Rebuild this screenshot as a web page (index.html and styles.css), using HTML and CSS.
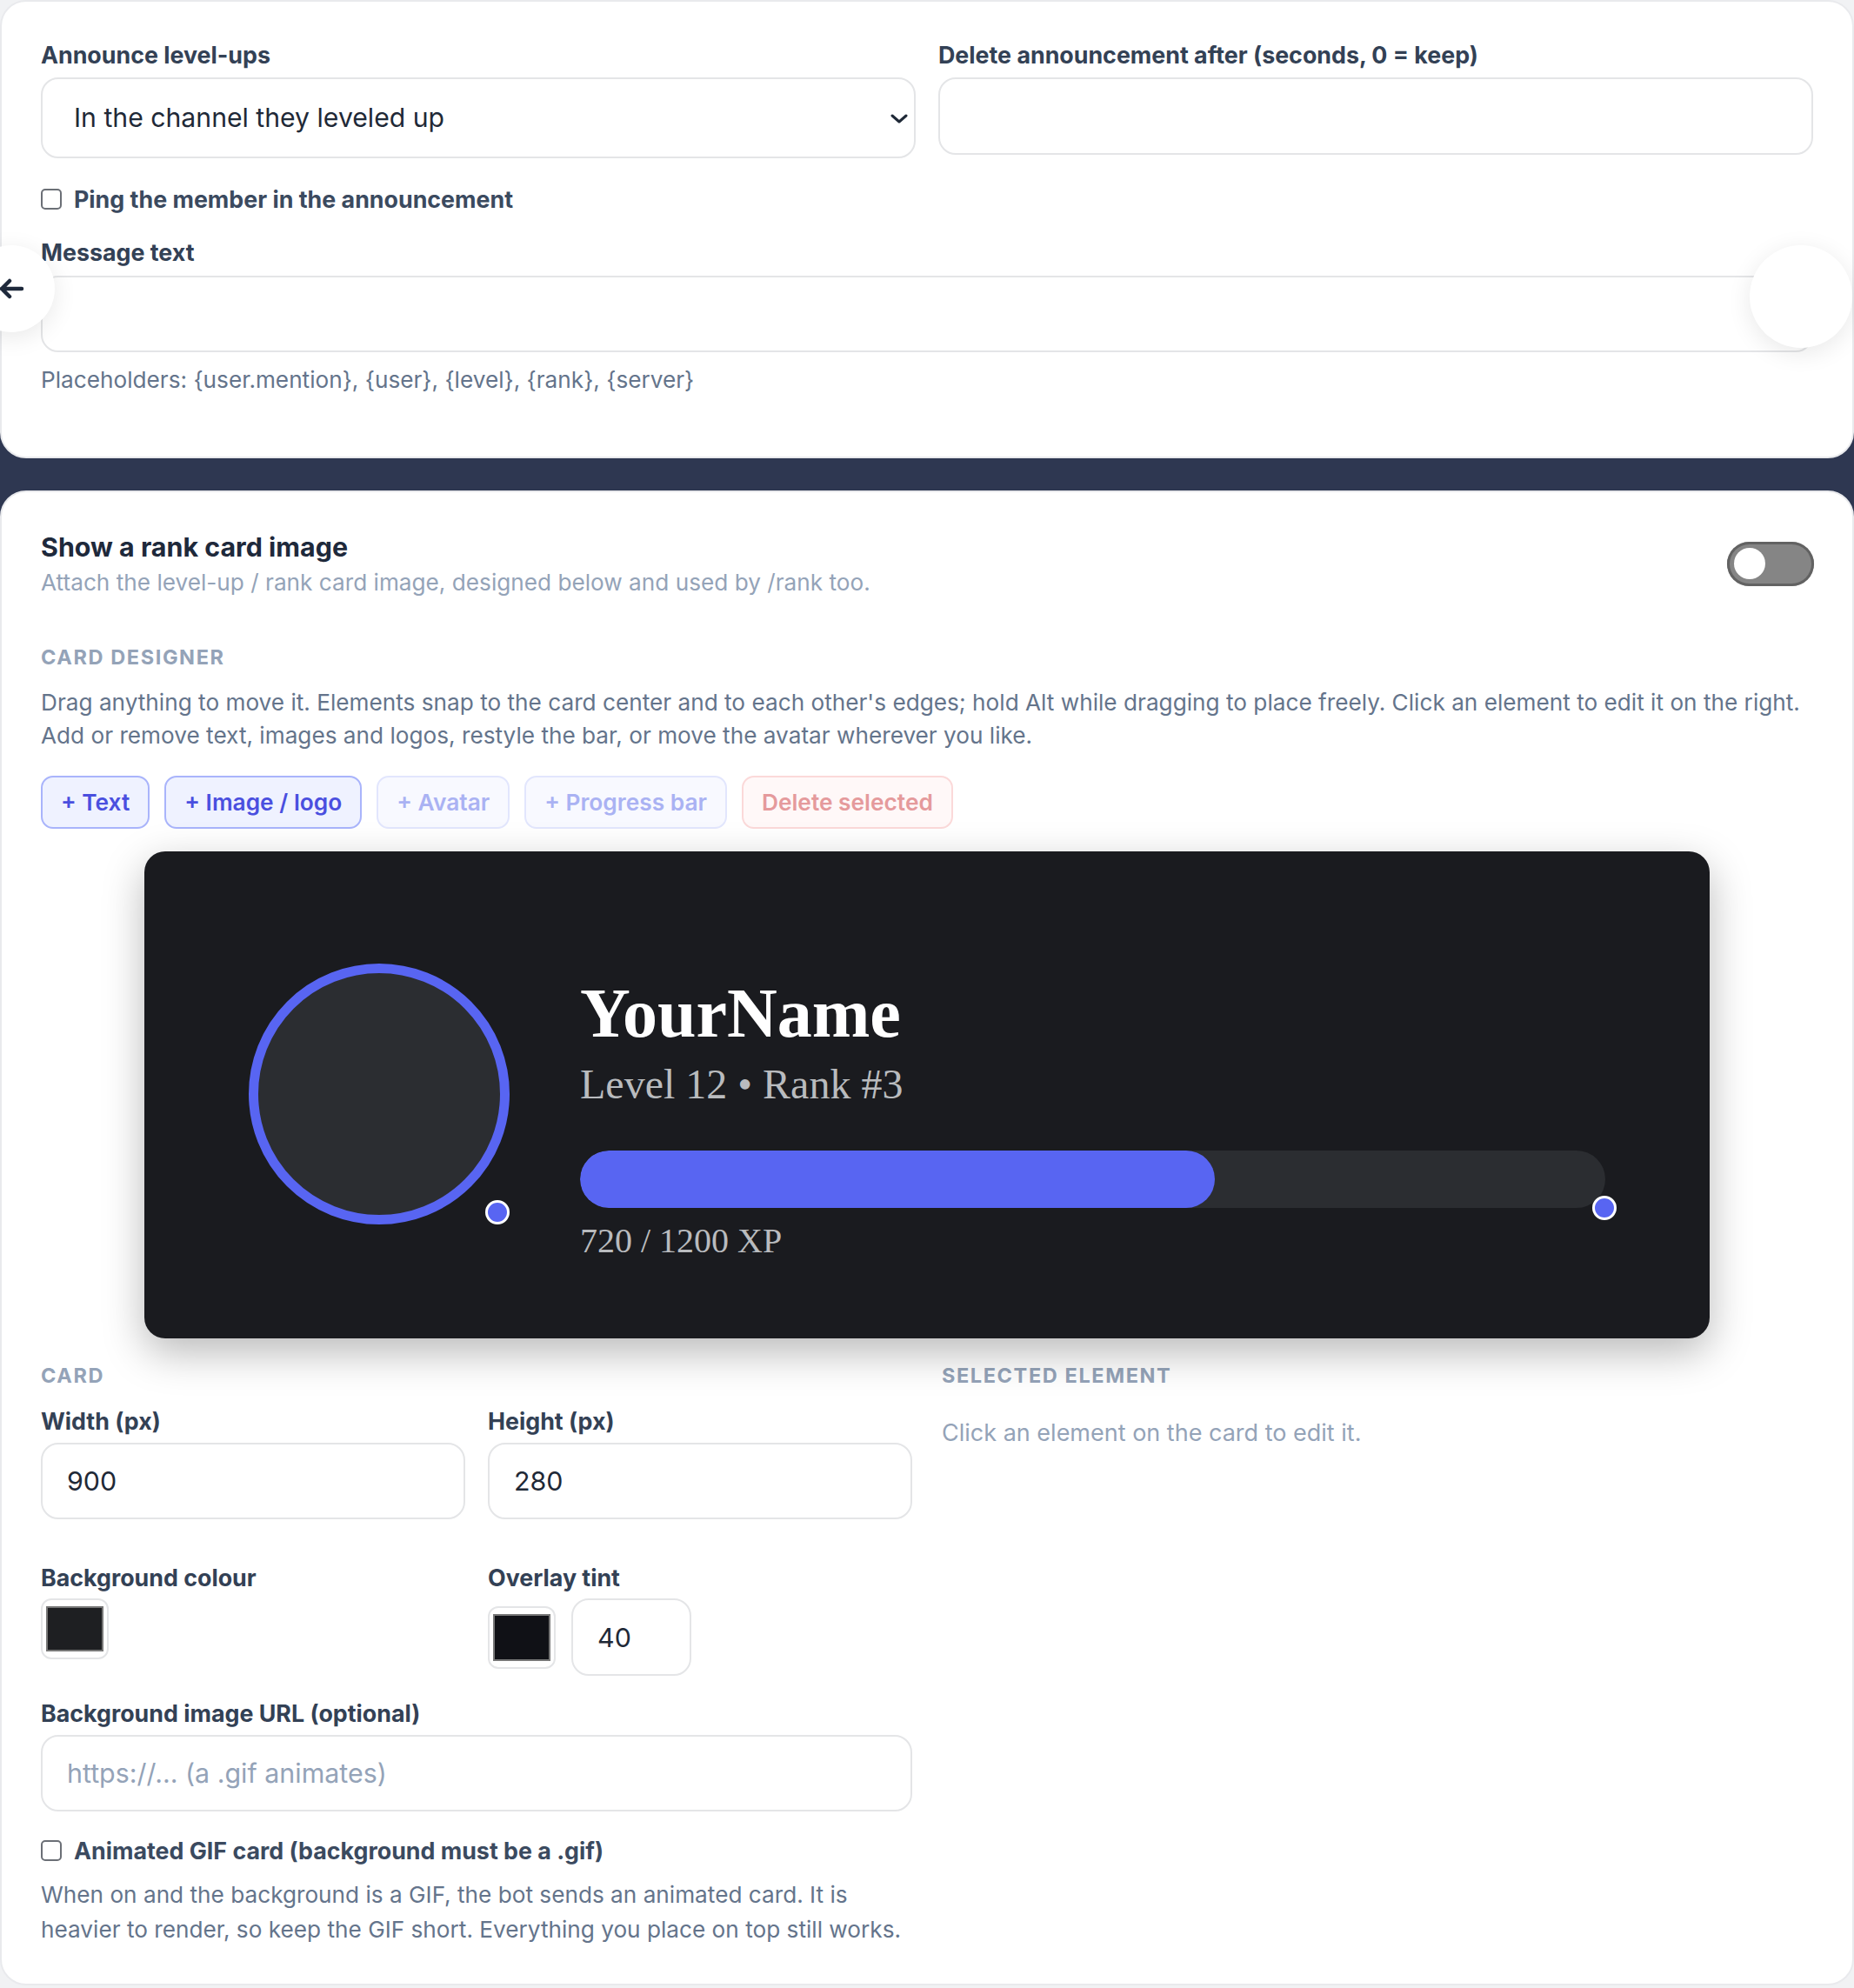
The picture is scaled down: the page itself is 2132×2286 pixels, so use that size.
FILE: index.html
```html
<!DOCTYPE html>
<html lang="en">
<head>
<meta charset="utf-8">
<title>Level-up settings</title>
<link rel="stylesheet" href="styles.css">
</head>
<body>
<div class="page">
  <section class="panel panel-top">
    <div class="grid-two">
      <div class="field">
        <div class="label">Announce level-ups</div>
        <div class="select">
          <span>In the channel they leveled up</span>
          <svg class="chevron" width="20" height="11" viewBox="0 0 20 11"><path d="M2 2 L10 9 L18 2" fill="none" stroke="#1f2937" stroke-width="3" stroke-linecap="round" stroke-linejoin="round"/></svg>
        </div>
      </div>
      <div class="field">
        <div class="label">Delete announcement after (seconds, 0 = keep)</div>
        <input class="input input-delete" type="text" value="">
      </div>
    </div>
    <label class="check-row check-ping"><input class="checkbox" type="checkbox">Ping the member in the announcement</label>
    <div class="label label-msg">Message text</div>
    <input class="input input-msg" type="text" value="">
    <p class="hint">Placeholders: {user.mention}, {user}, {level}, {rank}, {server}</p>
  </section>

  <section class="panel panel-bottom">
    <div class="head-row">
      <div class="head-text">
        <div class="title">Show a rank card image</div>
        <div class="subtitle">Attach the level-up / rank card image, designed below and used by /rank too.</div>
      </div>
      <div class="toggle"><span class="knob"></span></div>
    </div>

    <div class="section-head designer-head">CARD DESIGNER</div>
    <p class="desc">Drag anything to move it. Elements snap to the card center and to each other's edges; hold Alt while dragging to place freely. Click an element to edit it on the right.<br>Add or remove text, images and logos, restyle the bar, or move the avatar wherever you like.</p>

    <div class="btn-row">
      <button class="btn btn-primary">+ Text</button>
      <button class="btn btn-primary">+ Image / logo</button>
      <button class="btn btn-muted">+ Avatar</button>
      <button class="btn btn-muted">+ Progress bar</button>
      <button class="btn btn-danger">Delete selected</button>
    </div>

    <div class="preview-wrap">
      <div class="rank-card">
        <div class="avatar"></div>
        <span class="handle handle-avatar"></span>
        <div class="rc-name">YourName</div>
        <div class="rc-level">Level 12 • Rank #3</div>
        <div class="rc-bar"><div class="rc-fill" style="width: 61.9%"></div></div>
        <span class="handle handle-bar"></span>
        <div class="rc-xp">720 / 1200 XP</div>
      </div>
    </div>

    <div class="grid-lower">
      <div class="col-left">
        <div class="section-head">CARD</div>
        <div class="grid-inner row-size">
          <div class="field">
            <div class="label">Width (px)</div>
            <input class="input input-size" type="text" value="900">
          </div>
          <div class="field">
            <div class="label">Height (px)</div>
            <input class="input input-size" type="text" value="280">
          </div>
        </div>
        <div class="grid-inner row-colors">
          <div class="field">
            <div class="label label-color">Background colour</div>
            <div class="swatch swatch-bg"><span class="swatch-fill fill-bg"></span></div>
          </div>
          <div class="field">
            <div class="label label-color">Overlay tint</div>
            <div class="tint-row">
              <div class="swatch swatch-tint"><span class="swatch-fill fill-tint"></span></div>
              <input class="input input-num" type="text" value="40">
            </div>
          </div>
        </div>
        <div class="label label-url">Background image URL (optional)</div>
        <input class="input input-url" type="text" placeholder="https://... (a .gif animates)">
        <label class="check-row check-gif"><input class="checkbox" type="checkbox">Animated GIF card (background must be a .gif)</label>
        <p class="help">When on and the background is a GIF, the bot sends an animated card. It is<br>heavier to render, so keep the GIF short. Everything you place on top still works.</p>
      </div>
      <div class="col-right">
        <div class="section-head">SELECTED ELEMENT</div>
        <p class="empty-note">Click an element on the card to edit it.</p>
      </div>
    </div>
  </section>

  <button class="nav nav-left" aria-label="Back">
    <svg width="30" height="24" viewBox="0 0 30 24"><path d="M27 12 H4 M13 3 L4 12 L13 21" fill="none" stroke="#1e293b" stroke-width="4.5" stroke-linecap="round" stroke-linejoin="round"/></svg>
  </button>
  <button class="nav nav-right" aria-label="Next"></button>
</div>
</body>
</html>
```

FILE: styles.css
```css
* { box-sizing: border-box; }

html, body {
  margin: 0;
  padding: 0;
  background: #f1f2f4;
}

body {
  font-family: Inter, "Noto Sans", "Liberation Sans", sans-serif;
  color: #334155;
}

.page {
  position: relative;
  overflow: hidden;
  width: 2132px;
  min-height: 2286px;
  background: linear-gradient(#f1f2f4 0 200px, #2e3751 200px calc(100% - 300px), #f1f2f4 calc(100% - 300px));
}

.panel {
  background: #ffffff;
  border: 2px solid #e9eaed;
  border-radius: 30px;
  padding-left: 45px;
  padding-right: 45px;
}

.panel-top {
  padding-top: 44.5px;
  padding-bottom: 72.5px;
}

.panel-bottom {
  margin-top: 37px;
  padding-top: 44.5px;
  padding-bottom: 42px;
}

.grid-two {
  display: grid;
  grid-template-columns: 1fr 1fr;
  column-gap: 26px;
  align-items: start;
}

.field {
  display: flex;
  flex-direction: column;
}

.label {
  font-size: 26.8px;
  line-height: 32px;
  font-weight: 700;
  color: #334155;
  margin-bottom: 10px;
}

.select {
  height: 93px;
  border: 2px solid #e4e5e7;
  border-radius: 20px;
  display: flex;
  align-items: center;
  justify-content: space-between;
  padding: 0 7px 0 36px;
  font-size: 30.2px;
  color: #1f2937;
  background: #fff;
}

.chevron { display: block; margin-top: 2px; }

.input {
  display: block;
  width: 100%;
  border: 2px solid #e4e5e7;
  border-radius: 20px;
  background: #fff;
  font-family: Inter, "Noto Sans", sans-serif;
  font-size: 30.4px;
  color: #1f2937;
  padding: 0 28px;
  outline: none;
}

.input::placeholder { color: #94a3b8; }

.input-delete { height: 89px; }
.input-msg { height: 88px; }
.input-size { height: 88px; }
.input-url { height: 88px; }
.input-num { width: 138px; height: 89px; }

.check-row {
  display: flex;
  align-items: center;
  font-size: 26.8px;
  line-height: 32px;
  font-weight: 700;
  color: #3b4a5f;
}

.checkbox {
  appearance: none;
  -webkit-appearance: none;
  width: 24px;
  height: 24px;
  margin: 0 14px 0 0;
  border: 2px solid #6b6f76;
  border-radius: 5px;
  background: #fff;
  flex: none;
}

.check-ping { margin-top: 31.5px; }

.label-msg {
  margin-top: 28.5px;
  margin-bottom: 11.5px;
}

.hint {
  margin: 15.5px 0 0;
  font-size: 26.2px;
  line-height: 32px;
  color: #64748b;
}

/* bottom panel */
.head-row {
  display: flex;
  align-items: center;
  justify-content: space-between;
}

.title {
  font-size: 30.4px;
  line-height: 36px;
  font-weight: 700;
  color: #1e293b;
}

.subtitle {
  margin-top: 7px;
  font-size: 26.2px;
  line-height: 32px;
  color: #94a3b8;
}

.toggle {
  width: 100px;
  height: 51px;
  border-radius: 26px;
  background: #858585;
  box-shadow: inset 0 0 0 3px #626262;
  display: flex;
  align-items: center;
  padding-left: 8px;
  margin-right: -1px;
}

.knob {
  width: 36px;
  height: 36px;
  border-radius: 50%;
  background: #fff;
}

.section-head {
  font-size: 23.5px;
  line-height: 28px;
  font-weight: 700;
  letter-spacing: 1.6px;
  color: #94a3b8;
}

.designer-head { margin-top: 56px; }

.desc {
  margin: 19px 0 0;
  font-size: 26.2px;
  line-height: 38px;
  color: #64748b;
}

.btn-row {
  display: flex;
  gap: 17px;
  margin-top: 27.5px;
}

.btn {
  height: 61px;
  padding: 0 21px;
  border: 2px solid;
  border-radius: 14px;
  font-family: Inter, "Noto Sans", sans-serif;
  font-size: 26.3px;
  font-weight: 600;
}

.btn-primary {
  border-color: #a9b4fb;
  background: #eff2ff;
  color: #4a4fdf;
}

.btn-muted {
  border-color: #e2e6fd;
  background: #f8f9ff;
  color: #aab2f3;
}

.btn-danger {
  border-color: #fbd9d9;
  background: #fff8f8;
  color: #e59a9c;
}

.preview-wrap {
  display: flex;
  justify-content: center;
  margin-top: 26px;
}

.rank-card {
  position: relative;
  width: 1800px;
  height: 560px;
  background: #1a1b1f;
  border-radius: 24px;
  box-shadow: 0 16px 48px rgba(0, 0, 0, 0.28);
  font-family: "Liberation Serif", "Times New Roman", serif;
}

.avatar {
  position: absolute;
  left: 120px;
  top: 129px;
  width: 300px;
  height: 300px;
  border-radius: 50%;
  border: 11px solid #5865f2;
  background: #2b2d31;
}

.handle {
  position: absolute;
  width: 28px;
  height: 28px;
  border-radius: 50%;
  background: #5865f2;
  border: 3px solid #fff;
}

.handle-avatar { left: 392px; top: 401px; }
.handle-bar { left: 1665px; top: 396px; }

.rc-name {
  position: absolute;
  left: 501px;
  top: 146px;
  font-size: 80px;
  line-height: 1;
  font-weight: 700;
  color: #ffffff;
  white-space: nowrap;
}

.rc-level {
  position: absolute;
  left: 501px;
  top: 244px;
  font-size: 48px;
  line-height: 1;
  color: #b9bbbe;
  white-space: nowrap;
}

.rc-bar {
  position: absolute;
  left: 501px;
  top: 344px;
  width: 1179px;
  height: 66px;
  border-radius: 33px;
  background: #2b2d31;
  overflow: hidden;
}

.rc-fill {
  height: 100%;
  border-radius: 33px;
  background: #5865f2;
}

.rc-xp {
  position: absolute;
  left: 501px;
  top: 427.5px;
  font-size: 40px;
  line-height: 1;
  color: #b9bbbe;
  white-space: nowrap;
}

.grid-lower {
  display: grid;
  grid-template-columns: 1fr 1fr;
  column-gap: 34px;
  margin-top: 28.5px;
  align-items: start;
}

.grid-inner {
  display: grid;
  grid-template-columns: 1fr 1fr;
  column-gap: 26px;
  align-items: start;
}

.row-size { margin-top: 22px; }
.row-size .label { margin-bottom: 9.5px; }

.row-colors { margin-top: 50.5px; }
.label-color { margin-bottom: 8.5px; }

.swatch {
  display: flex;
  border: 2px solid #e4e5e7;
  border-radius: 12px;
  background: #fff;
  padding: 7px 4px;
}

.swatch-bg { width: 78px; height: 70px; }
.swatch-tint { width: 78px; height: 72px; }

.swatch-fill {
  flex: 1;
  border: 2px solid #777;
}

.fill-bg { background: #1e1f22; }
.fill-tint { background: #101116; }

.tint-row {
  display: flex;
  align-items: center;
  gap: 18px;
}

.label-url {
  margin-top: 26.5px;
  margin-bottom: 9.5px;
}

.check-gif { margin-top: 28.5px; }

.help {
  margin: 15.5px 0 0;
  font-size: 26.2px;
  line-height: 40px;
  color: #64748b;
  white-space: nowrap;
}

.empty-note {
  margin: 36px 0 0;
  font-size: 27px;
  line-height: 32px;
  color: #94a3b8;
}

.nav {
  position: absolute;
  border: none;
  border-radius: 50%;
  background: #fff;
  box-shadow: 0 6px 28px rgba(0, 0, 0, 0.09);
  display: flex;
  align-items: center;
  justify-content: center;
  padding: 0;
}

.nav-left {
  left: -37px;
  top: 282px;
  width: 100px;
  height: 100px;
}

.nav-right {
  left: 2012px;
  top: 282px;
  width: 118px;
  height: 118px;
}
```
